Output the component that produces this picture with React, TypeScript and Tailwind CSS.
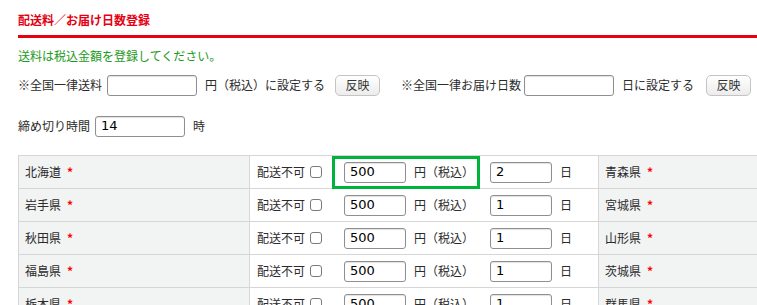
import React from "react";

const jp = { fontFamily: '"Noto Sans CJK JP", "Noto Sans", sans-serif' };

const rows: [string, string, string, string][] = [
  ["北海道", "500", "2", "青森県"],
  ["岩手県", "500", "1", "宮城県"],
  ["秋田県", "500", "1", "山形県"],
  ["福島県", "500", "1", "茨城県"],
  ["栃木県", "500", "1", "群馬県"],
];

function TextBox({ value, w }: { value?: string; w: string }) {
  return (
    <div
      className={`${w} h-[21px] shrink-0 rounded-[3px] border border-[#8f8f8f] bg-white pl-[5px] flex items-center text-[13px] text-black shadow-[inset_0_1px_1px_rgba(0,0,0,0.12)]`}
      style={{ fontFamily: '"DejaVu Sans", sans-serif' }}
    >
      {value}
    </div>
  );
}

function Btn() {
  return (
    <div className="w-[45px] h-[21px] shrink-0 rounded-[5px] border border-[#c4c4c4] bg-gradient-to-b from-white to-[#ececec] flex items-center justify-center text-[12px] text-[#333]">
      反映
    </div>
  );
}

function Check() {
  return <span className="inline-block w-[12px] h-[12px] rounded-[3px] border border-[#7a7a7a] bg-white shrink-0" />;
}

export default function App() {
  return (
    <div className="w-[757px] h-[305px] overflow-hidden bg-white text-[#2b2b2b]" style={jp}>
      <div className="pl-[18px] w-[1400px]">
        <div className="pt-[12px] pb-[7px] h-[38px] border-b-[3px] border-[#e60012] text-[12px] leading-[16px] font-bold text-[#e60012]">
          配送料／お届け日数登録
        </div>
        <div className="mt-[10px] text-[12px] leading-[16px] text-[#1c9a1c]">
          送料は税込金額を登録してください。
        </div>
        <div className="mt-[10px] h-[22px] flex items-center text-[12px]">
          <span>※全国一律送料</span>
          <span className="ml-[5px]"><TextBox w="w-[90px]" /></span>
          <span className="ml-[8px]">円（税込）に設定する</span>
          <span className="ml-[10px]"><Btn /></span>
          <span className="ml-[21px]">※全国一律お届け日数</span>
          <span className="ml-[3px]"><TextBox w="w-[90px]" /></span>
          <span className="ml-[8px]">日に設定する</span>
          <span className="ml-[12px]"><Btn /></span>
        </div>
        <div className="mt-[19px] h-[22px] flex items-center text-[12px]">
          <span>締め切り時間</span>
          <span className="ml-[5px]"><TextBox w="w-[90px]" value="14" /></span>
          <span className="ml-[8px]">時</span>
        </div>
        <div className="relative mt-[18px] text-[12px]">
          {rows.map(([a, price, days, b], i) => (
            <div key={i} className="flex h-[33px] border-t border-[#d6d6d6]">
              <div className="w-[232px] shrink-0 bg-[#f2f3f3] border-l border-r border-[#d6d6d6] pl-[6px] flex items-center">
                {a}
                <span className="ml-[6px] text-[#ff0000] font-bold">*</span>
              </div>
              <div className="w-[82px] shrink-0 pl-[7px] flex items-center gap-[5px]">
                配送不可
                <Check />
              </div>
              <div className="w-[147px] shrink-0 pl-[12px] flex items-center">
                <TextBox w="w-[62px]" value={price} />
                <span className="ml-[8px]">円（税込）</span>
              </div>
              <div className="w-[119px] shrink-0 pl-[11px] flex items-center">
                <TextBox w="w-[62px]" value={days} />
                <span className="ml-[8px]">日</span>
              </div>
              <div className="w-[232px] shrink-0 bg-[#f2f3f3] border-l border-r border-[#d6d6d6] pl-[6px] flex items-center">
                {b}
                <span className="ml-[6px] text-[#ff0000] font-bold">*</span>
              </div>
              <div className="w-[348px] shrink-0" />
            </div>
          ))}
          <div className="absolute left-[314px] top-[1px] w-[148px] h-[33px] border-[3px] border-[#00b33c]" />
        </div>
      </div>
    </div>
  );
}
